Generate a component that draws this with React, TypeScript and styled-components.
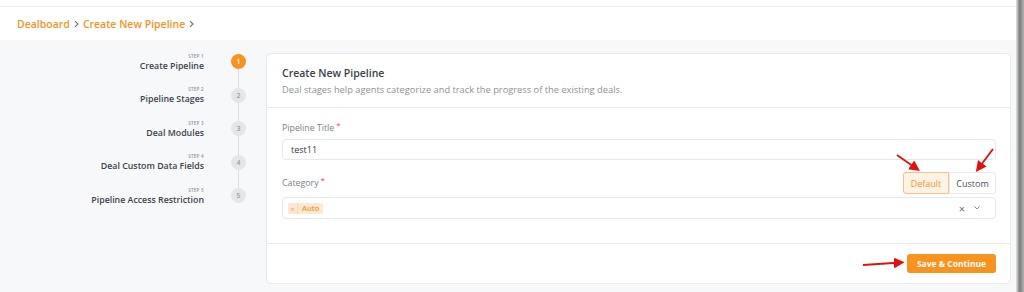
import React from 'react'
import styled, { createGlobalStyle } from 'styled-components'

const ORANGE = '#f7931e'

const GlobalStyle = createGlobalStyle`
  html, body {
    margin: 0;
    padding: 0;
    background: #ffffff;
  }
  body {
    font-family: 'Open Sans', 'DejaVu Sans', sans-serif;
    color: #3a3f47;
  }
  * {
    box-sizing: border-box;
  }
`

const steps = [
  { step: 'STEP 1', label: 'Create Pipeline' },
  { step: 'STEP 2', label: 'Pipeline Stages' },
  { step: 'STEP 3', label: 'Deal Modules' },
  { step: 'STEP 4', label: 'Deal Custom Data Fields' },
  { step: 'STEP 5', label: 'Pipeline Access Restriction' },
]

const Chevron = () => (
  <svg width='7' height='8' viewBox='0 0 7 8'>
    <path d='M2 1.2 L5 4 L2 6.8' fill='none' stroke='#6b7078' strokeWidth='1.1' />
  </svg>
)

// red annotation arrows drawn over the screenshot
const Arrows = () => (
  <ArrowLayer width='1024' height='292' viewBox='0 0 1024 292'>
    <defs>
      <marker id='head' markerWidth='6' markerHeight='6' refX='4' refY='3' orient='auto'>
        <path d='M0 0 L6 3 L0 6 Z' fill='#e5100e' />
      </marker>
    </defs>
    <line x1='897' y1='155' x2='917' y2='169' stroke='#e5100e' strokeWidth='1.8' markerEnd='url(#head)' />
    <line x1='993' y1='149' x2='978' y2='169' stroke='#e5100e' strokeWidth='1.8' markerEnd='url(#head)' />
    <line x1='863' y1='265' x2='901' y2='262.5' stroke='#e5100e' strokeWidth='1.8' markerEnd='url(#head)' />
  </ArrowLayer>
)

export default function App() {
  return (
    <>
      <GlobalStyle />
      <Screen>
        <Page>
          <TopStrip />
          <Header>
            <Crumb>Dealboard</Crumb>
            <Chevron />
            <Crumb>Create New Pipeline</Crumb>
            <Chevron />
          </Header>
          <Body>
            {/* Stepper */}
            <Sidebar>
              {steps.map((s, i) => (
                <Step key={s.step} last={i === steps.length - 1}>
                  <StepText>
                    <StepNo>{s.step}</StepNo>
                    <StepLabel>{s.label}</StepLabel>
                  </StepText>
                  <StepDot active={i === 0}>{i + 1}</StepDot>
                </Step>
              ))}
            </Sidebar>
            {/* Form card */}
            <Card>
              <CardHead>
                <CardTitle>Create New Pipeline</CardTitle>
                <CardSub>Deal stages help agents categorize and track the progress of the existing deals.</CardSub>
              </CardHead>
              <CardBody>
                <Label>
                  Pipeline Title<Req>*</Req>
                </Label>
                <Input>test11</Input>
                <CategoryRow>
                  <Label>
                    Category<Req>*</Req>
                  </Label>
                  <Toggle>
                    <ToggleBtn selected>Default</ToggleBtn>
                    <ToggleBtn>Custom</ToggleBtn>
                  </Toggle>
                </CategoryRow>
                <Select>
                  <Tag>
                    <TagX>×</TagX>
                    <TagText>Auto</TagText>
                  </Tag>
                  <SelectIcons>
                    <ClearX>×</ClearX>
                    <svg width='8' height='6' viewBox='0 0 8 6'>
                      <path d='M1.5 1.5 L4 4 L6.5 1.5' fill='none' stroke='#8a8f96' strokeWidth='1' />
                    </svg>
                  </SelectIcons>
                </Select>
              </CardBody>
              <CardFoot>
                <SaveButton>Save &amp; Continue</SaveButton>
              </CardFoot>
            </Card>
          </Body>
        </Page>
        <EdgeShadow />
        <Arrows />
      </Screen>
    </>
  )
}

const Screen = styled.div`
  position: relative;
  display: flex;
  width: 1024px;
  height: 292px;
  overflow: hidden;
`

const Page = styled.div`
  flex: 1;
  display: flex;
  flex-direction: column;
  background: #f7f8fa;
`

const EdgeShadow = styled.div`
  width: 8px;
  background: linear-gradient(to right, #e4e4e4 0%, #8c8c8c 38%, #7c7c7c 50%, #b4b4b4 100%);
`

const ArrowLayer = styled.svg`
  position: absolute;
  left: 0;
  top: 0;
  pointer-events: none;
`

const TopStrip = styled.div`
  height: 7px;
  background: #fff;
  border-bottom: 1px solid #ebedf0;
`

const Header = styled.div`
  height: 33px;
  background: #fff;
  display: flex;
  align-items: center;
  gap: 3px;
  padding-left: 17px;
`

const Crumb = styled.span`
  color: ${ORANGE};
  font-size: 10.5px;
  font-weight: 600;
`

const Body = styled.div`
  flex: 1;
  display: flex;
  align-items: flex-start;
  padding: 13px 5px 0 0;
`

const Sidebar = styled.div`
  width: 266px;
  padding: 0 20px 0 0;
  margin-top: -8px;
  display: flex;
  flex-direction: column;
  align-items: flex-end;
`

const Step = styled.div<{ last?: boolean }>`
  position: relative;
  height: 33.5px;
  display: flex;
  align-items: center;
  gap: 27px;
  &::before {
    content: '';
    display: ${({ last }) => (last ? 'none' : 'block')};
    position: absolute;
    right: 7px;
    top: 16.75px;
    width: 1px;
    height: 33.5px;
    background: #dcdfe3;
  }
`

const StepText = styled.div`
  display: flex;
  flex-direction: column;
  align-items: flex-end;
  margin-top: 1px;
`

const StepNo = styled.span`
  font-size: 4.5px;
  font-weight: 600;
  color: #8a8f96;
  letter-spacing: 0.3px;
  line-height: 7px;
`

const StepLabel = styled.span`
  font-size: 8.8px;
  font-weight: 600;
  color: #3d434b;
  line-height: 12px;
`

const StepDot = styled.div<{ active?: boolean }>`
  position: relative;
  z-index: 1;
  width: 15px;
  height: 15px;
  border-radius: 50%;
  display: flex;
  align-items: center;
  justify-content: center;
  font-size: 7px;
  font-weight: 600;
  background: ${({ active }) => (active ? ORANGE : '#e4e6e9')};
  color: ${({ active }) => (active ? '#fff' : '#9a9ea4')};
`

const Card = styled.div`
  flex: 1;
  background: #fff;
  border: 1px solid #e8eaee;
  border-radius: 5px;
`

const CardHead = styled.div`
  padding: 12px 15px 10px;
  border-bottom: 1px solid #e8eaee;
`

const CardTitle = styled.div`
  font-size: 10.5px;
  font-weight: 600;
  color: #3a3f47;
  line-height: 14px;
`

const CardSub = styled.div`
  font-size: 9.3px;
  color: #8d9199;
  line-height: 14px;
  margin-top: 3px;
`

const CardBody = styled.div`
  padding: 14px 14px 24px 15px;
  border-bottom: 1px solid #e8eaee;
`

const Label = styled.div`
  font-size: 8.8px;
  color: #7a7f87;
  line-height: 12px;
`

const Req = styled.span`
  position: relative;
  top: -3px;
  color: #f0443a;
  font-size: 8px;
  line-height: 0;
  margin-left: 2px;
`

const Input = styled.div`
  margin-top: 5px;
  height: 21px;
  border: 1px solid #e6e8ec;
  border-radius: 4px;
  padding-left: 8px;
  display: flex;
  align-items: center;
  font-size: 9px;
  font-weight: 500;
  color: #33383f;
`

const CategoryRow = styled.div`
  margin-top: 12px;
  display: flex;
  align-items: center;
  justify-content: space-between;
`

const Toggle = styled.div`
  display: flex;
`

const ToggleBtn = styled.div<{ selected?: boolean }>`
  height: 22px;
  width: ${({ selected }) => (selected ? '46px' : '47px')};
  display: flex;
  align-items: center;
  justify-content: center;
  font-size: 9px;
  font-weight: 500;
  border: 1px solid ${({ selected }) => (selected ? '#f8c08a' : '#e8eaee')};
  background: ${({ selected }) => (selected ? '#fff3e6' : '#fff')};
  color: ${({ selected }) => (selected ? ORANGE : '#4d525a')};
  border-radius: ${({ selected }) => (selected ? '3px 0 0 3px' : '0 3px 3px 0')};
`

const Select = styled.div`
  margin-top: 3px;
  height: 22px;
  border: 1px solid #e6e8ec;
  border-radius: 4px;
  padding: 0 14px 0 5px;
  display: flex;
  align-items: center;
  justify-content: space-between;
`

const Tag = styled.div`
  display: flex;
  align-items: center;
  height: 11px;
  background: #fde8d4;
  border-radius: 2px;
`

const TagX = styled.span`
  width: 10px;
  text-align: center;
  font-size: 8px;
  color: #f2a25a;
  border-right: 1px solid #fbd6b3;
  line-height: 11px;
`

const TagText = styled.span`
  padding: 0 4px 0 4px;
  font-size: 7.5px;
  font-weight: 600;
  color: ${ORANGE};
`

const SelectIcons = styled.div`
  display: flex;
  align-items: center;
  gap: 8px;
`

const ClearX = styled.span`
  font-size: 11px;
  color: #6b7078;
  line-height: 11px;
`

const CardFoot = styled.div`
  display: flex;
  justify-content: flex-end;
  padding: 10px 14px 10px 0;
`

const SaveButton = styled.div`
  width: 89px;
  height: 19px;
  border-radius: 3px;
  background: ${ORANGE};
  color: #fff;
  font-size: 8.5px;
  font-weight: 700;
  display: flex;
  align-items: center;
  justify-content: center;
`
